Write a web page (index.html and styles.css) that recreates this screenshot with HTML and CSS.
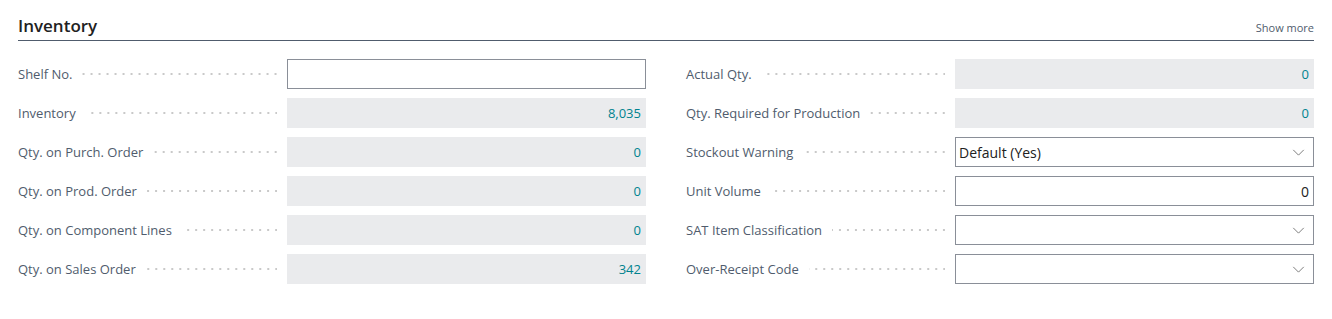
FILE: index.html
```html
<!DOCTYPE html>
<html lang="en">
<head>
    <meta charset="UTF-8">
    <title>Item Card - Inventory</title>
    <link rel="stylesheet" href="styles.css">
</head>
<body>
    <section class="fasttab">
        <header class="fasttab-header">
            <h2>Inventory</h2>
            <a class="show-more" href="#">Show more</a>
        </header>

        <div class="fields">
            <div class="column">
                <div class="field">
                    <label>Shelf No.</label>
                    <input type="text" class="box">
                </div>
                <div class="field">
                    <label>Inventory</label>
                    <div class="box readonly">8,035</div>
                </div>
                <div class="field">
                    <label>Qty. on Purch. Order</label>
                    <div class="box readonly">0</div>
                </div>
                <div class="field">
                    <label>Qty. on Prod. Order</label>
                    <div class="box readonly">0</div>
                </div>
                <div class="field">
                    <label>Qty. on Component Lines</label>
                    <div class="box readonly">0</div>
                </div>
                <div class="field">
                    <label>Qty. on Sales Order</label>
                    <div class="box readonly">342</div>
                </div>
            </div>

            <div class="column">
                <div class="field">
                    <label>Actual Qty.</label>
                    <div class="box readonly">0</div>
                </div>
                <div class="field">
                    <label>Qty. Required for Production</label>
                    <div class="box readonly">0</div>
                </div>
                <div class="field">
                    <label>Stockout Warning</label>
                    <div class="box select">
                        <span>Default (Yes)</span>
                        <svg class="chevron" viewBox="0 0 14 8"><path d="M1 1l6 6 6-6"/></svg>
                    </div>
                </div>
                <div class="field">
                    <label>Unit Volume</label>
                    <div class="box number">0</div>
                </div>
                <div class="field">
                    <label>SAT Item Classification</label>
                    <div class="box select">
                        <span></span>
                        <svg class="chevron" viewBox="0 0 14 8"><path d="M1 1l6 6 6-6"/></svg>
                    </div>
                </div>
                <div class="field">
                    <label>Over-Receipt Code</label>
                    <div class="box select">
                        <span></span>
                        <svg class="chevron" viewBox="0 0 14 8"><path d="M1 1l6 6 6-6"/></svg>
                    </div>
                </div>
            </div>
        </div>
    </section>
</body>
</html>
```

FILE: styles.css
```css
body {
    margin: 0;
    background: #fff;
    font-family: "Open Sans", "Noto Sans", sans-serif;
    color: #212121;
}

.fasttab {
    padding: 0 18px;
}

.fasttab-header {
    height: 41px;
    display: flex;
    align-items: flex-end;
    justify-content: space-between;
    border-bottom: 1px solid #505c6d;
    box-sizing: border-box;
    padding-bottom: 3px;
}

.fasttab-header h2 {
    margin: 0;
    font-size: 17px;
    font-weight: 600;
    line-height: 22px;
    color: #212121;
}

.show-more {
    font-size: 11px;
    color: #505c6d;
    text-decoration: none;
    margin-bottom: 2px;
}

.fields {
    display: grid;
    grid-template-columns: 1fr 1fr;
    column-gap: 40px;
    padding-top: 18px;
}

.column {
    display: flex;
    flex-direction: column;
    gap: 9px;
}

.field {
    display: flex;
    align-items: center;
    height: 30px;
}

.field label {
    width: 259px;
    margin-right: 10px;
    font-size: 13px;
    color: #505c6d;
    display: flex;
    align-items: center;
    white-space: nowrap;
}

.field label::after {
    content: "";
    flex: 1;
    height: 2px;
    margin-left: 10px;
    background-image: radial-gradient(circle, #c9c9c9 0.9px, transparent 1.1px);
    background-size: 8px 2px;
    background-position: right -3px center;
    background-repeat: repeat-x;
}

.box {
    flex: 1;
    height: 30px;
    box-sizing: border-box;
    font-family: inherit;
    font-size: 13px;
    display: flex;
    align-items: center;
    padding: 0 4px;
    border: 1px solid #8a8f98;
    background: #fff;
    margin: 0;
}

.readonly {
    border: none;
    background: #eaebed;
    color: #00838f;
    justify-content: flex-end;
    padding-right: 5px;
}

.number {
    justify-content: flex-end;
    color: #212121;
    font-size: 14px;
}

.select {
    justify-content: space-between;
    padding-left: 3px;
    padding-right: 8px;
    font-size: 14px;
}

.chevron {
    width: 13px;
    height: 7px;
    fill: none;
    stroke: #6b6b6b;
    stroke-width: 1;
}
```
